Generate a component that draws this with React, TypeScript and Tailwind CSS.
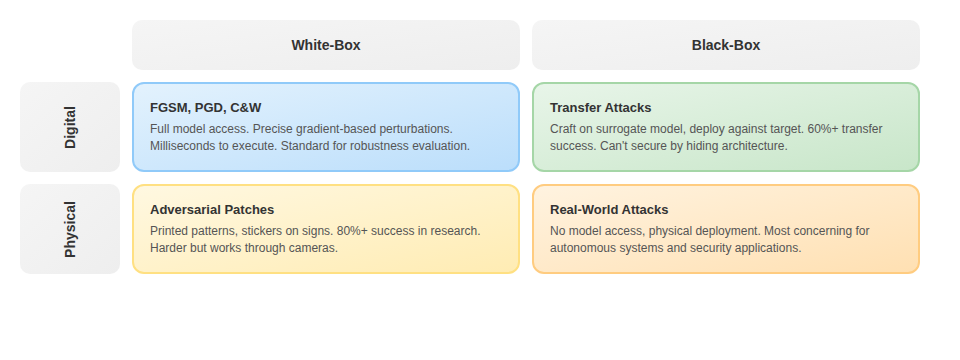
type Cell = {
  title: string;
  text: string;
  className: string;
};

const rows: { label: string; cells: Cell[] }[] = [
  {
    label: "Digital",
    cells: [
      {
        title: "FGSM, PGD, C&W",
        text: "Full model access. Precise gradient-based perturbations. Milliseconds to execute. Standard for robustness evaluation.",
        className: "bg-gradient-to-br from-[#e3f2fd] to-[#bbdefb] border-[#90caf9]",
      },
      {
        title: "Transfer Attacks",
        text: "Craft on surrogate model, deploy against target. 60%+ transfer success. Can't secure by hiding architecture.",
        className: "bg-gradient-to-br from-[#e8f5e9] to-[#c8e6c9] border-[#a5d6a7]",
      },
    ],
  },
  {
    label: "Physical",
    cells: [
      {
        title: "Adversarial Patches",
        text: "Printed patterns, stickers on signs. 80%+ success in research. Harder but works through cameras.",
        className: "bg-gradient-to-br from-[#fff8e1] to-[#ffecb3] border-[#ffe082]",
      },
      {
        title: "Real-World Attacks",
        text: "No model access, physical deployment. Most concerning for autonomous systems and security applications.",
        className: "bg-gradient-to-br from-[#fff3e0] to-[#ffe0b2] border-[#ffcc80]",
      },
    ],
  },
];

export default function App() {
  return (
    <div className="w-[960px] h-[360px] bg-white font-['Liberation_Sans',Arial,sans-serif] p-5">
      <div className="grid grid-cols-[100px_388px_388px] grid-rows-[50px_90px_90px] gap-3">
        <div />
        {["White-Box", "Black-Box"].map((h) => (
          <div
            key={h}
            className="rounded-[10px] bg-gradient-to-br from-[#f5f5f5] to-[#eeeeee] flex items-center justify-center text-[14px] font-bold text-[#333]"
          >
            {h}
          </div>
        ))}

        {rows.map((row) => (
          <>
            <div
              key={row.label}
              className="rounded-[10px] bg-gradient-to-br from-[#f5f5f5] to-[#eeeeee] flex items-center justify-center"
            >
              <span className="-rotate-90 text-[14px] font-bold text-[#333] whitespace-nowrap">
                {row.label}
              </span>
            </div>
            {row.cells.map((c) => (
              <div
                key={c.title}
                className={`rounded-[12px] border-2 px-4 pt-[15px] pb-4 ${c.className}`}
              >
                <div className="text-[13px] font-bold text-[#333] leading-[18px]">
                  {c.title}
                </div>
                <p className="mt-1 text-[12px] text-[#555] leading-[17px]">
                  {c.text}
                </p>
              </div>
            ))}
          </>
        ))}
      </div>
    </div>
  );
}
